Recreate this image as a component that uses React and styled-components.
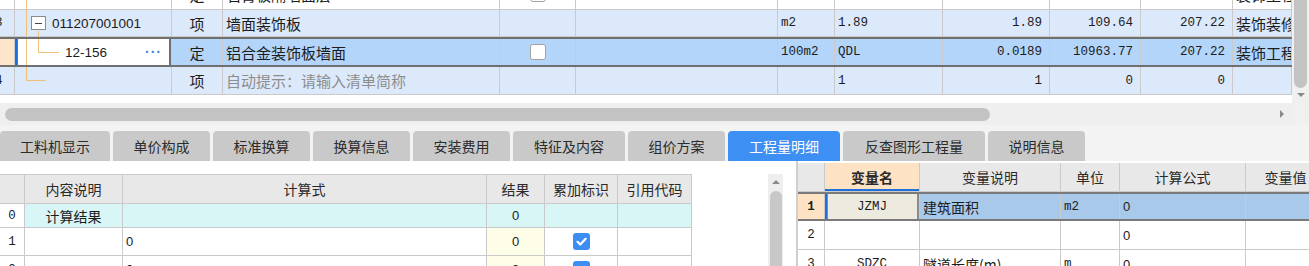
import styled, { createGlobalStyle } from "styled-components";

const SANS = `"Noto Sans CJK SC", "Noto Sans", sans-serif`;
const MONO = `"Liberation Mono", "Noto Sans CJK SC", monospace`;
const NUM = `"Liberation Sans", "Noto Sans CJK SC", sans-serif`;

const GlobalStyle = createGlobalStyle`
  html, body { margin: 0; padding: 0; background: #fff; overflow: hidden; }
  body { font-family: ${SANS}; color: #1c1c1c; }
`;

const TOP_COLS = "15px 157px 51px 277px 76px 202px 57px 108px 107px 91px 92px 59px";
const LEFT_COLS = "25px 98px 364px 58px 73px 74px";
const RIGHT_COLS = "27px 95px 141px 59px 126px 80px";
const GRID_LINE = "#cacaca";
const TREE_COLOR = "#f1bf78";

const Page = styled.div`
  width: 1309px;
  height: 266px;
  display: flex;
  flex-direction: column;
  overflow: hidden;
  background: #fff;
`;

/* ---------- top grid ---------- */
const TopPane = styled.div`
  height: 125px;
  flex: none;
  display: grid;
  grid-template-columns: 1292px 17px;
  grid-template-rows: 103px 22px;
`;

const GridViewport = styled.div`
  overflow: hidden;
  background: #fff;
`;

const TopRow = styled.div`
  display: grid;
  grid-template-columns: ${TOP_COLS};
  height: ${(p) => p.$h}px;
  box-sizing: border-box;
  background: ${(p) => p.$bg};
  border-top: ${(p) => (p.$sel ? "2px solid #707070" : "0")};
  border-bottom: ${(p) => (p.$sel ? "2px solid #707070" : `1px solid ${GRID_LINE}`)};
  font-size: 15px;
  &:first-child {
    margin-top: -21px;
  }
`;

const Cell = styled.div`
  display: flex;
  align-items: center;
  justify-content: ${(p) => ({ right: "flex-end", center: "center" }[p.$align] || "flex-start")};
  padding: ${(p) => (p.$align === "right" ? "0 7px 0 0" : p.$align === "center" ? "0" : "0 0 0 3px")};
  border-right: 1px solid ${GRID_LINE};
  box-sizing: border-box;
  overflow: hidden;
  white-space: nowrap;
  background: ${(p) => p.$bg || "transparent"};
  color: ${(p) => (p.$muted ? "#8d8d8d" : "#1c1c1c")};
  font-family: ${(p) => (p.$mono ? MONO : p.$num ? NUM : SANS)};
  font-size: ${(p) => (p.$mono ? "12.5px" : p.$num ? "13px" : "inherit")};
  font-weight: ${(p) => (p.$bold ? 700 : 400)};
`;

const RowNum = styled(Cell)`
  padding: 0;
  font-family: ${MONO};
  font-size: 12.5px;
  & > span {
    margin-left: -5px;
  }
`;

const line = `linear-gradient(${TREE_COLOR}, ${TREE_COLOR})`;
const TREE = {
  pass: `${line} 11px 0 / 1px 100% no-repeat`,
  parent: `${line} 11px 0 / 1px 100% no-repeat, ${line} 23px 21px / 1px 100% no-repeat`,
  child: `${line} 11px 0 / 1px 100% no-repeat, ${line} 23px 0 / 1px 14px no-repeat, ${line} 23px 13px / 21px 1px no-repeat`,
  last: `${line} 11px 0 / 1px 14px no-repeat, ${line} 11px 13px / 20px 1px no-repeat`,
};

const CodeCell = styled(Cell)`
  background: ${(p) => TREE[p.$tree]}, ${(p) => p.$bg || "transparent"};
  padding: 0 9px 0 ${(p) => p.$indent}px;
  font-family: ${NUM};
  font-size: 13.5px;
  box-shadow: ${(p) =>
    p.$focus ? "inset 2px 0 0 #1f6fdc, inset 3px 0 0 #707070, inset -2px 0 0 #707070" : "none"};
`;

const ExpandBox = styled.span`
  width: 15px;
  height: 14px;
  box-sizing: border-box;
  border: 1px solid #8b8b8b;
  background: #fff;
  display: flex;
  align-items: center;
  justify-content: center;
  margin-right: 6px;
  flex: none;
  &::before {
    content: "";
    width: 7px;
    height: 1px;
    background: #444;
  }
`;

const More = styled.span`
  margin-left: auto;
  color: #3f86d8;
  font-size: 14px;
  letter-spacing: 1px;
  font-weight: 700;
`;

const BoxCheck = styled.span`
  width: 16px;
  height: 16px;
  box-sizing: border-box;
  border: 1px solid #a3a3a3;
  border-radius: 3px;
  background: #fff;
`;

const VScroll = styled.div`
  background: #f0f0f0;
  display: flex;
  flex-direction: column;
  align-items: center;
`;

const VThumb = styled.div`
  width: 13px;
  height: 88px;
  border-radius: 0 0 7px 7px;
  background: #c3c3c3;
`;

const ArrowDown = styled.span`
  margin-top: 5px;
  width: 0;
  height: 0;
  border-left: 4px solid transparent;
  border-right: 4px solid transparent;
  border-top: 4px solid #8a8a8a;
`;

const HScroll = styled.div`
  background: #efefef;
  display: flex;
  align-items: center;
  padding: 0 8px 0 5px;
`;

const HThumb = styled.div`
  width: 985px;
  height: 13px;
  border-radius: 7px;
  background: #c3c3c3;
`;

const ArrowRight = styled.span`
  margin-left: auto;
  width: 0;
  height: 0;
  border-top: 4px solid transparent;
  border-bottom: 4px solid transparent;
  border-left: 4px solid #8a8a8a;
`;

const Corner = styled.div`
  background: #f0f0f0;
`;

/* ---------- tabs ---------- */
const TabBar = styled.div`
  height: 36px;
  flex: none;
  box-sizing: border-box;
  padding-top: 6px;
  background: #f3f3f3;
  display: flex;
  gap: 3px;
`;

const Tab = styled.div`
  width: ${(p) => p.$w}px;
  height: 30px;
  flex: none;
  display: flex;
  align-items: center;
  justify-content: center;
  border-radius: 4px 4px 0 0;
  background: ${(p) => (p.$active ? "#3d8ff4" : "#c9c9c9")};
  color: ${(p) => (p.$active ? "#fff" : "#2b2b2b")};
  font-size: 14px;
`;

/* ---------- bottom ---------- */
const BottomPane = styled.div`
  flex: 1;
  display: flex;
  min-height: 0;
`;

const LeftPanel = styled.div`
  width: 796px;
  flex: none;
  display: flex;
  padding-top: 13px;
  box-sizing: border-box;
`;

const LeftTableArea = styled.div`
  width: 768px;
  flex: none;
`;

const LeftTable = styled.div`
  width: 692px;
`;

const SmallRow = styled.div`
  display: grid;
  grid-template-columns: ${(p) => p.$cols};
  height: ${(p) => p.$h}px;
  box-sizing: border-box;
  background: ${(p) => p.$bg || "#fff"};
  border-top: ${(p) => (p.$sel ? "2px solid #7a7a7a" : p.$top ? `1px solid ${GRID_LINE}` : "0")};
  border-bottom: ${(p) => (p.$sel ? "2px solid #7a7a7a" : `1px solid ${GRID_LINE}`)};
  font-size: 14px;
`;

const HeadCell = styled(Cell)`
  justify-content: center;
  padding: 0;
  background: ${(p) => p.$bg || "#e8e8e8"};
  color: #2a2a2a;
  font-weight: ${(p) => (p.$bold ? 700 : 400)};
  box-shadow: ${(p) => (p.$mark ? "inset 0 -2px 0 #1f6fdc" : "none")};
`;

const BlueCheck = styled.span`
  width: 17px;
  height: 17px;
  border-radius: 3px;
  background: #3d8ef3;
  display: flex;
  align-items: center;
  justify-content: center;
`;

const LeftScroll = styled.div`
  width: 15px;
  flex: none;
  background: #eeeeee;
  display: flex;
  flex-direction: column;
  align-items: center;
`;

const ArrowUp = styled.span`
  margin: 6px 0 7px;
  width: 0;
  height: 0;
  border-left: 4px solid transparent;
  border-right: 4px solid transparent;
  border-bottom: 4px solid #8a8a8a;
`;

const LeftThumb = styled.div`
  width: 12px;
  flex: 1;
  border-radius: 6px 6px 0 0;
  background: #c8c8c8;
`;

const Divider = styled.div`
  width: 2px;
  flex: none;
  background: #cfcfcf;
`;

const RightPanel = styled.div`
  flex: 1;
  overflow: hidden;
  padding-top: 2px;
`;

const FocusCell = styled(Cell)`
  justify-content: center;
  padding: 0;
  background: #edeadf;
  box-shadow: inset 2px 0 0 #1f6fdc, inset 3px 0 0 #8a8a8a, inset -2px 0 0 #8a8a8a;
`;

const Tick = () => (
  <svg width="13" height="13" viewBox="0 0 13 13">
    <path d="M2.5 6.8 L5.3 9.4 L10.6 3.8" fill="none" stroke="#fff" strokeWidth="2.2" strokeLinecap="round" strokeLinejoin="round" />
  </svg>
);

const TABS = [
  ["工料机显示", 110],
  ["单价构成", 97],
  ["标准换算", 97],
  ["换算信息", 97],
  ["安装费用", 97],
  ["特征及内容", 112],
  ["组价方案", 97],
  ["工程量明细", 112, true],
  ["反查图形工程量", 142],
  ["说明信息", 97],
];

const ROW_BG = "#dce9fb";
const SEL_BG = "#b4d5fa";

export default function App() {
  return (
    <>
      <GlobalStyle />
      <Page>
        <TopPane>
          <GridViewport>
            <TopRow $h={31} $bg="#fff">
              <RowNum />
              <CodeCell $tree="pass" $indent={16} />
              <Cell $align="center">定</Cell>
              <Cell>石膏板隔墙面层</Cell>
              <Cell $align="center"><BoxCheck /></Cell>
              <Cell />
              <Cell $mono />
              <Cell $mono />
              <Cell $mono $align="right" />
              <Cell $mono $align="right" />
              <Cell $mono $align="right" />
              <Cell>装饰工程</Cell>
            </TopRow>
            <TopRow $h={27} $bg={ROW_BG}>
              <RowNum><span>3</span></RowNum>
              <CodeCell $tree="parent" $indent={16}>
                <ExpandBox />
                011207001001
              </CodeCell>
              <Cell $align="center">项</Cell>
              <Cell>墙面装饰板</Cell>
              <Cell />
              <Cell />
              <Cell $mono>m2</Cell>
              <Cell $mono>1.89</Cell>
              <Cell $mono $align="right">1.89</Cell>
              <Cell $mono $align="right">109.64</Cell>
              <Cell $mono $align="right">207.22</Cell>
              <Cell>装饰装修工程</Cell>
            </TopRow>
            <TopRow $h={30} $bg={SEL_BG} $sel>
              <RowNum $bg="#fde5cc" />
              <CodeCell $tree="child" $indent={50} $bg="#fff" $focus>
                12-156
                <More>···</More>
              </CodeCell>
              <Cell $align="center">定</Cell>
              <Cell>铝合金装饰板墙面</Cell>
              <Cell $align="center"><BoxCheck /></Cell>
              <Cell />
              <Cell $mono>100m2</Cell>
              <Cell $mono>QDL</Cell>
              <Cell $mono $align="right">0.0189</Cell>
              <Cell $mono $align="right">10963.77</Cell>
              <Cell $mono $align="right">207.22</Cell>
              <Cell>装饰工程</Cell>
            </TopRow>
            <TopRow $h={28} $bg={ROW_BG}>
              <RowNum><span>4</span></RowNum>
              <CodeCell $tree="last" $indent={16} />
              <Cell $align="center">项</Cell>
              <Cell $muted>自动提示：请输入清单简称</Cell>
              <Cell />
              <Cell />
              <Cell $mono />
              <Cell $mono>1</Cell>
              <Cell $mono $align="right">1</Cell>
              <Cell $mono $align="right">0</Cell>
              <Cell $mono $align="right">0</Cell>
              <Cell />
            </TopRow>
          </GridViewport>
          <VScroll>
            <VThumb />
            <ArrowDown />
          </VScroll>
          <HScroll>
            <HThumb />
            <ArrowRight />
          </HScroll>
          <Corner />
        </TopPane>

        <TabBar>
          {TABS.map(([label, w, active]) => (
            <Tab key={label} $w={w} $active={active}>
              {label}
            </Tab>
          ))}
        </TabBar>

        <BottomPane>
          <LeftPanel>
            <LeftTableArea>
              <LeftTable>
                <SmallRow $cols={LEFT_COLS} $h={30} $top>
                  <HeadCell />
                  <HeadCell>内容说明</HeadCell>
                  <HeadCell>计算式</HeadCell>
                  <HeadCell>结果</HeadCell>
                  <HeadCell>累加标识</HeadCell>
                  <HeadCell>引用代码</HeadCell>
                </SmallRow>
                <SmallRow $cols={LEFT_COLS} $h={24} $bg="#d9f6f6">
                  <Cell $align="center" $mono $bg="#fff">0</Cell>
                  <Cell $align="center">计算结果</Cell>
                  <Cell />
                  <Cell $align="center" $num>0</Cell>
                  <Cell />
                  <Cell />
                </SmallRow>
                {[1, 2].map((n) => (
                  <SmallRow key={n} $cols={LEFT_COLS} $h={28}>
                    <Cell $align="center" $mono>{n}</Cell>
                    <Cell />
                    <Cell $num>0</Cell>
                    <Cell $align="center" $num $bg="#fdfde8">0</Cell>
                    <Cell $align="center">
                      <BlueCheck><Tick /></BlueCheck>
                    </Cell>
                    <Cell />
                  </SmallRow>
                ))}
              </LeftTable>
            </LeftTableArea>
            <LeftScroll>
              <ArrowUp />
              <LeftThumb />
            </LeftScroll>
          </LeftPanel>
          <Divider />
          <RightPanel>
            <SmallRow $cols={RIGHT_COLS} $h={29}>
              <HeadCell />
              <HeadCell $bg="#fde3c4" $bold $mark>变量名</HeadCell>
              <HeadCell>变量说明</HeadCell>
              <HeadCell>单位</HeadCell>
              <HeadCell>计算公式</HeadCell>
              <HeadCell>变量值</HeadCell>
            </SmallRow>
            <SmallRow $cols={RIGHT_COLS} $h={29} $bg="#a9c9eb" $sel>
              <Cell $align="center" $mono $bold $bg="#fde3c4">1</Cell>
              <FocusCell $mono>JZMJ</FocusCell>
              <Cell>建筑面积</Cell>
              <Cell $mono>m2</Cell>
              <Cell $num>0</Cell>
              <Cell />
            </SmallRow>
            <SmallRow $cols={RIGHT_COLS} $h={29}>
              <Cell $align="center" $mono>2</Cell>
              <Cell />
              <Cell />
              <Cell />
              <Cell $num>0</Cell>
              <Cell />
            </SmallRow>
            <SmallRow $cols={RIGHT_COLS} $h={29}>
              <Cell $align="center" $mono>3</Cell>
              <Cell $align="center" $mono>SDZC</Cell>
              <Cell>隧道长度(m)</Cell>
              <Cell $mono>m</Cell>
              <Cell $num>0</Cell>
              <Cell />
            </SmallRow>
          </RightPanel>
        </BottomPane>
      </Page>
    </>
  );
}
